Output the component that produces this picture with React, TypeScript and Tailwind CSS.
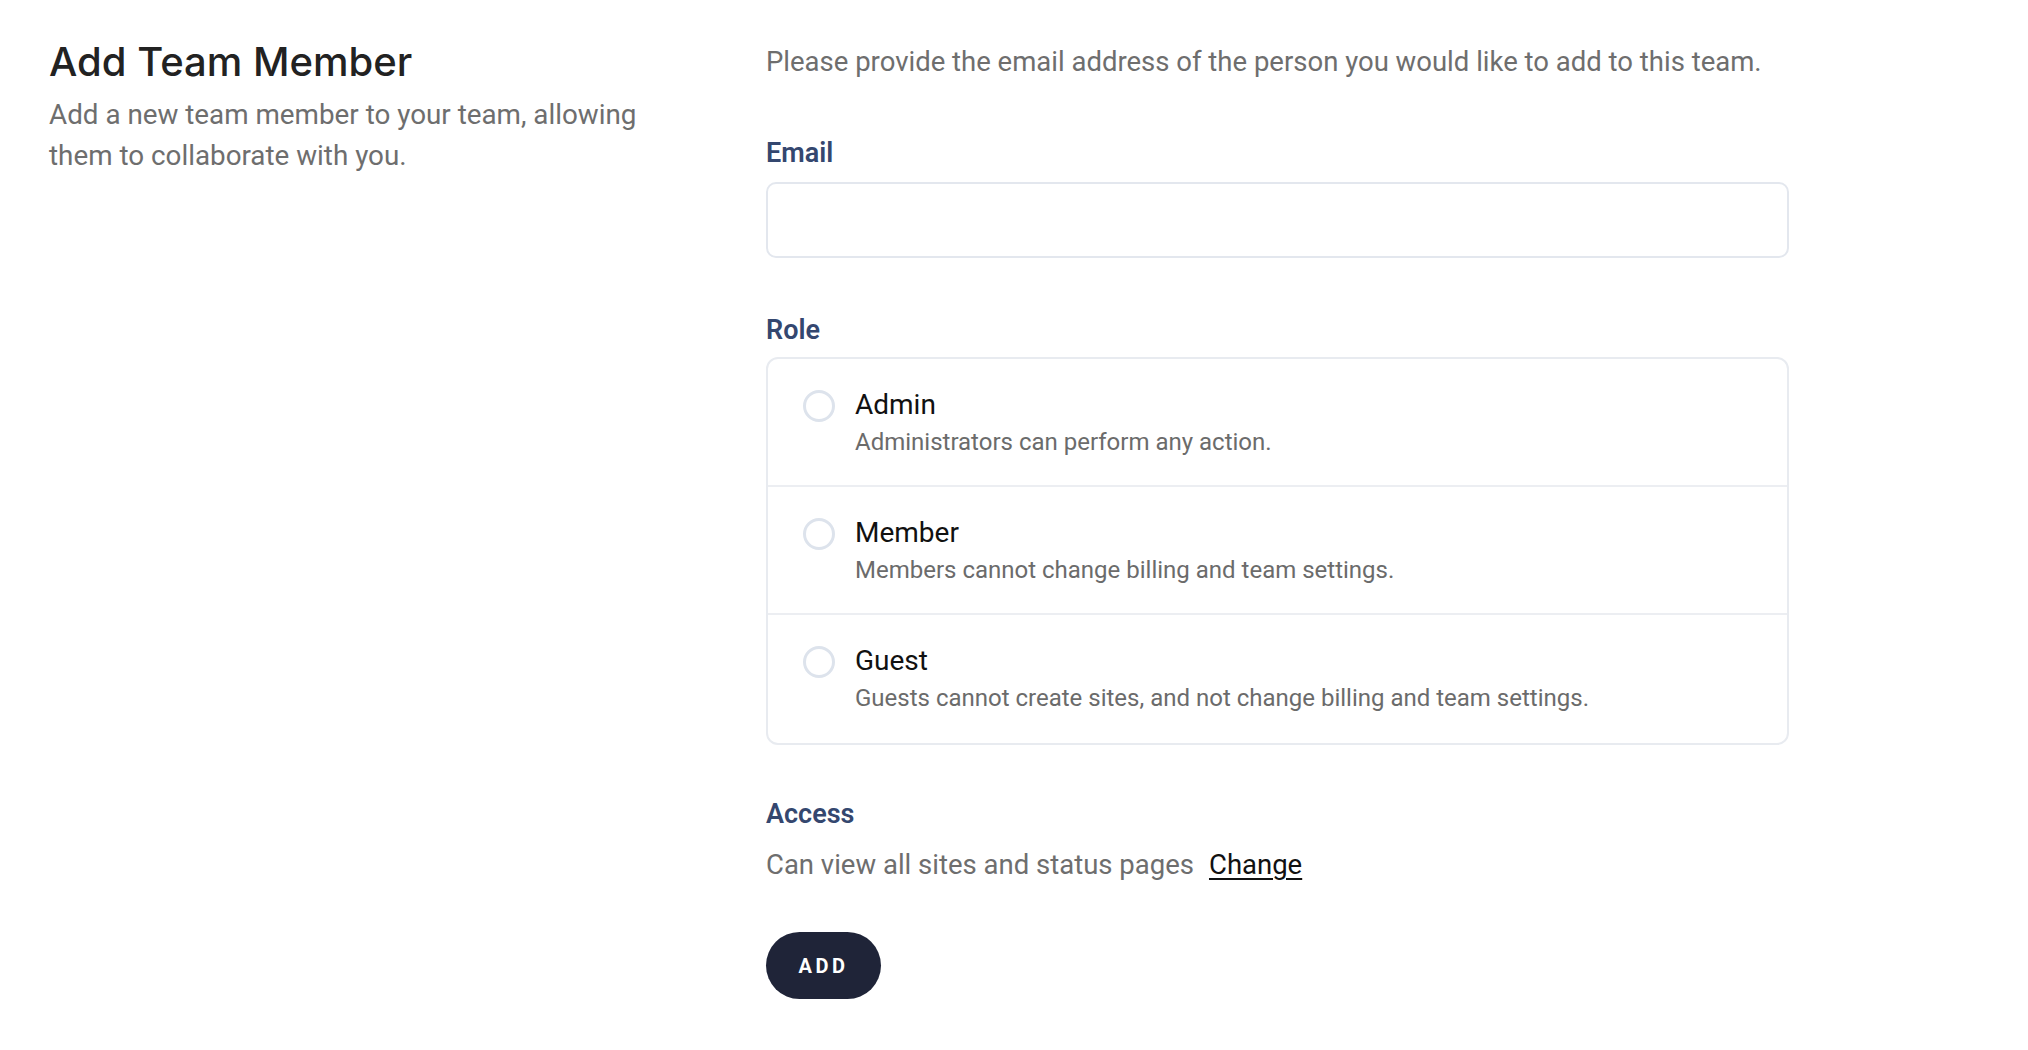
import React from 'react';

const roles = [
  { name: 'Admin', desc: 'Administrators can perform any action.' },
  { name: 'Member', desc: 'Members cannot change billing and team settings.' },
  { name: 'Guest', desc: 'Guests cannot create sites, and not change billing and team settings.' },
];

const App = () => {
  return (
    <div className="min-h-screen bg-white font-['Roboto',sans-serif] text-[#6e6e6e]">
      <div className="flex pl-[49px] pt-[40px]">
        <div className="w-[717px] shrink-0">
          <h1 className="font-['Inter',sans-serif] text-[40px] font-medium leading-[44px] text-[#222]">
            Add Team Member
          </h1>
          <p className="mt-[10px] w-[620px] text-[27.8px] leading-[41px]">
            Add a new team member to your team, allowing them to collaborate with you.
          </p>
        </div>

        <div className="w-[1023px] pt-[4px]">
          <p className="whitespace-nowrap text-[27.5px] leading-[36px]">
            Please provide the email address of the person you would like to add to this team.
          </p>

          <label className="mt-[58px] block text-[27px] font-semibold leading-[30px] text-[#34476f]">Email</label>
          <input
            type="email"
            className="mt-[14px] block h-[76px] w-full rounded-[10px] border-2 border-[#e3e7ee] px-4 text-[24px] outline-none"
          />

          <div className="mt-[57px] text-[27px] font-semibold leading-[30px] text-[#34476f]">Role</div>
          <div className="mt-[12px] overflow-hidden rounded-[12px] border-2 border-[#e8ebf0]">
            {roles.map((r, i) => (
              <label
                key={r.name}
                className={`flex h-[128px] gap-[20px] pl-[35px] pt-[29px] ${i < roles.length - 1 ? 'border-b-2 border-[#eceef2]' : ''}`}
              >
                <span className="mt-[2px] h-[32px] w-[32px] shrink-0 rounded-full border-[3px] border-[#dde3ec]" />
                <span className="flex flex-col">
                  <span className="text-[28px] leading-[34px] text-[#111]">{r.name}</span>
                  <span className="mt-[5px] text-[24px] leading-[30px] text-[#6b6b6b]">{r.desc}</span>
                </span>
              </label>
            ))}
          </div>

          <div className="mt-[54px] text-[27px] font-semibold leading-[30px] text-[#34476f]">Access</div>
          <div className="mt-[18px] flex items-center gap-[15px] text-[27.5px] leading-[36px]">
            <span>Can view all sites and status pages</span>
            <a href="#" className="text-[#111] underline underline-offset-4">Change</a>
          </div>

          <button className="mt-[49px] flex h-[67px] w-[115px] items-center justify-center rounded-full bg-[#1f2438] text-[20px] font-bold tracking-[0.18em] text-white">
            ADD
          </button>
        </div>
      </div>
    </div>
  );
};

export default App;
